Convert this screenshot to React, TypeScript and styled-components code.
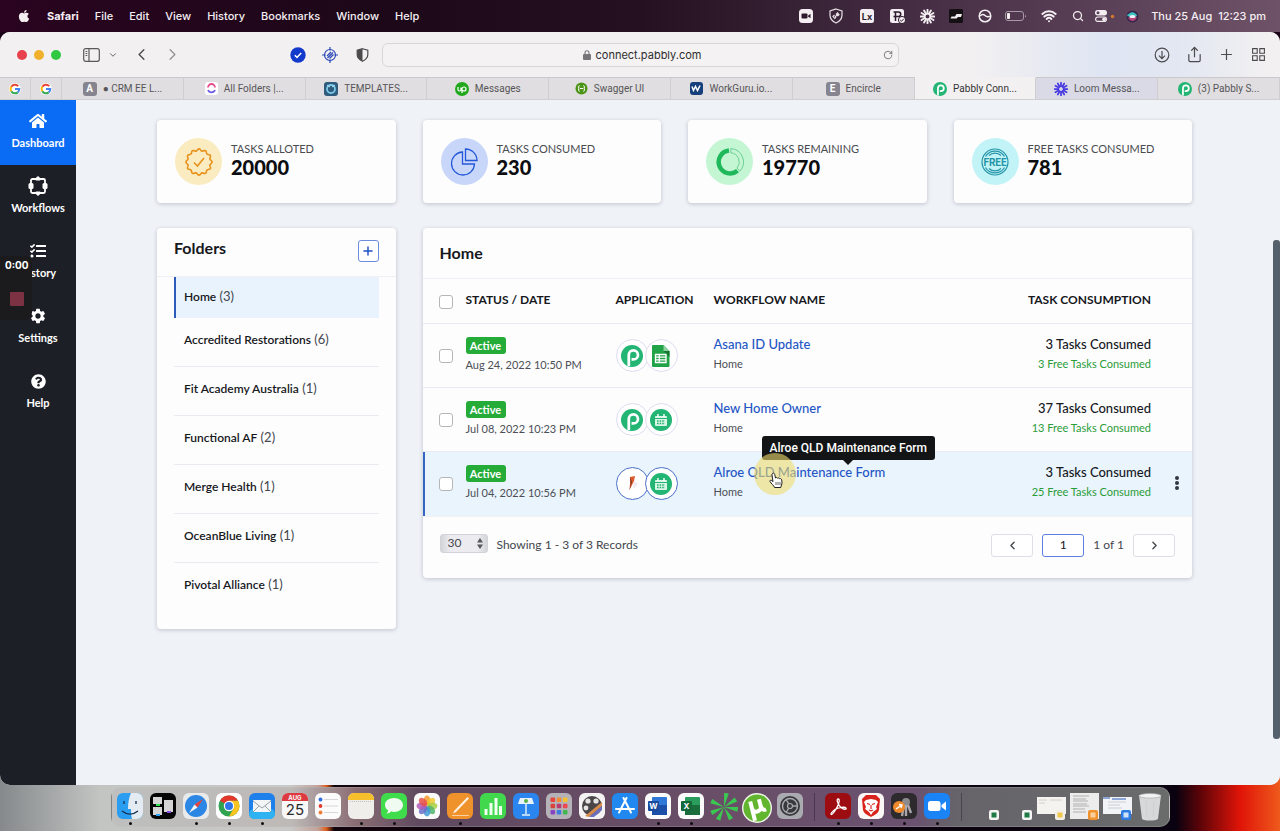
import React from "react";
import styled, { createGlobalStyle, css } from "styled-components";
import { FaApple, FaHome, FaTasks, FaQuestionCircle } from "react-icons/fa";
import { MdSettings } from "react-icons/md";
import {
  ChevronDown,
  ChevronLeft,
  ChevronRight,
  Wifi,
  Search,
  Plus,
  Share,
  RotateCw,
} from "lucide-react";

const Global = createGlobalStyle`
  * { box-sizing: border-box; }
  body { margin: 0; background: #0a0410; }
  button, input, select { font: inherit; color: inherit; margin: 0; }
  a { text-decoration: none; }
  svg { display: block; flex: none; }
`;

const UI = `Inter, "Liberation Sans", sans-serif`;
const APP = `Lato, "Open Sans", sans-serif`;

/* ---------- Desktop ---------- */

const Desktop = styled.div`
  min-height: 100vh;
  display: flex;
  flex-direction: column;
  font-family: ${UI};
  background:
    linear-gradient(90deg, #85898b 0, #c3c5c3 100px, #c9c9c7 290px, #c2a29a 318px, #e0601c 326px, #12040c 334px, #0a0410 1100px, #0a0210 1176px, #5c0408 1200px, #e01408 1240px, #ee5a1c 1280px)
      bottom / 100% 60px no-repeat,
    #1a0418;
`;

const MenuBar = styled.header`
  height: 32px;
  display: flex;
  align-items: center;
  justify-content: space-between;
  color: #f4eef2;
  background: linear-gradient(90deg, #2a0420 0, #1c0818 30%, #241020 50%, #432c42 70%, #6e5268 100%);
`;

const MenuList = styled.nav`
  display: flex;
  align-items: center;
  gap: 16px;
  padding-left: 17px;
`;

const MenuItem = styled.button<{ $bold?: boolean }>`
  border: 0;
  padding: 0;
  background: none;
  font-size: 11px;
  line-height: 16px;
  font-weight: ${(p) => (p.$bold ? 700 : 500)};
`;

const StatusList = styled.div`
  display: flex;
  align-items: center;
  padding-right: 14px;
`;

const StatusSlot = styled.span<{ $w?: number }>`
  position: relative;
  width: ${(p) => p.$w ?? 30}px;
  display: flex;
  justify-content: center;
`;

const Clock = styled.time`
  padding-left: 6px;
  font-size: 11px;
  font-weight: 500;
  white-space: pre;
`;

/* ---------- Browser window ---------- */

const BrowserWindow = styled.div`
  flex: 1;
  display: flex;
  flex-direction: column;
  border-radius: 10px;
  overflow: hidden;
  background: #f2f0f1;
`;

const Toolbar = styled.div`
  height: 45px;
  display: grid;
  grid-template-columns: 382px 1fr 381px;
  align-items: center;
  background: linear-gradient(90deg, #f2f0f1 0, #f2f0f1 76%, #dfe5f2 86%, #e2e7f2 92%, #f2f0f1 99%);
`;

const ToolGroup = styled.div<{ $end?: boolean }>`
  display: flex;
  align-items: center;
  color: #4c4a4c;
  ${(p) =>
    p.$end &&
    css`
      justify-content: flex-end;
      gap: 16px;
      padding-right: 14px;
    `}
`;

const Lights = styled.div`
  display: flex;
  gap: 7px;
  padding: 0 21px 0 17px;
`;

const Light = styled.span<{ $c: string }>`
  width: 10px;
  height: 10px;
  border-radius: 50%;
  background: ${(p) => p.$c};
`;

const ToolButton = styled.button<{ $w?: number; $faint?: boolean }>`
  border: 0;
  padding: 0;
  background: none;
  width: ${(p) => p.$w ?? 16}px;
  height: 20px;
  display: flex;
  align-items: center;
  justify-content: center;
  opacity: ${(p) => (p.$faint ? 0.55 : 1)};
`;

const Extensions = styled.div`
  display: flex;
  gap: 16px;
  margin-left: auto;
  padding-right: 12px;
`;

const Address = styled.div`
  height: 24px;
  border: 1px solid #d8d6d8;
  border-radius: 6px;
  background: #f4f2f3;
  display: flex;
  align-items: center;
  padding: 0 5px 0 18px;
  color: #2e2c2e;
  font-size: 11px;
`;

const AddressText = styled.span`
  flex: 1;
  display: flex;
  align-items: center;
  justify-content: center;
  gap: 5px;
`;

const Tabs = styled.div`
  height: 23px;
  display: flex;
  border-bottom: 1px solid #cfcfd2;
`;

const Tab = styled.button<{ $active?: boolean; $pinned?: boolean; $tint?: boolean }>`
  flex: ${(p) => (p.$pinned ? "0 0 31px" : "1 1 0")};
  min-width: 0;
  border: 0;
  border-top: 1px solid ${(p) => (p.$active ? "#f2f0f1" : "#cac8cb")};
  border-right: 1px solid #cfcdd0;
  padding: 0 4px;
  display: flex;
  align-items: center;
  justify-content: center;
  gap: 6px;
  white-space: nowrap;
  font-family: Roboto, sans-serif;
  font-size: 10px;
  color: ${(p) => (p.$active ? "#333" : "#575558")};
  background: ${(p) => (p.$active ? "#f2f0f1" : p.$tint ? "#d9dae6" : "#e0dee0")};
`;

const LetterIcon = styled.span`
  width: 14px;
  height: 14px;
  border-radius: 3px;
  background: #86848e;
  color: #fff;
  font-size: 10px;
  font-weight: 700;
  line-height: 14px;
  text-align: center;
`;

/* ---------- Application shell ---------- */

const Shell = styled.div`
  flex: 1;
  display: flex;
  background: #eff2f7;
  font-family: ${APP};
  color: #16181c;
`;

const SideNav = styled.nav`
  position: relative;
  flex: 0 0 76px;
  background: #1d1f26;
`;

const SideLink = styled.a<{ $active?: boolean }>`
  height: 65px;
  padding-top: 11px;
  display: flex;
  flex-direction: column;
  align-items: center;
  gap: 6px;
  color: #fff;
  font-size: 11px;
  line-height: 12px;
  font-weight: 700;
  background: ${(p) => (p.$active ? "#0a6cf5" : "transparent")};
`;

const SideIcon = styled.span`
  height: 20px;
  display: flex;
  align-items: center;
`;

const Recorder = styled.div`
  position: absolute;
  left: 0;
  top: 156px;
  width: 32px;
  height: 64px;
  padding: 3px 0 0 5px;
  border-radius: 0 8px 8px 0;
  background: #1b1b1d;
  color: #fff;
  font: 700 10px/12px Inter, sans-serif;
`;

const StopButton = styled.button`
  display: block;
  width: 14px;
  height: 14px;
  margin: 21px 0 0 5px;
  padding: 0;
  border: 0;
  border-radius: 1px;
  background: #7c3242;
`;

const Content = styled.main`
  flex: 1;
  min-width: 0;
  padding: 20px 81px 32px;
  display: grid;
  grid-template-columns: repeat(4, minmax(0, 1fr));
  grid-template-rows: auto 1fr;
  gap: 25px 27px;
  align-items: start;
`;

const ScrollTrack = styled.div`
  flex: 0 0 7px;
  display: flex;
  flex-direction: column;
  &::before { content: ""; flex: 140; }
  &::after { content: ""; flex: 46; }
`;

const ScrollThumb = styled.div`
  flex: 499;
  border-radius: 3px;
  background: #54616c;
`;

const Panel = styled.section<{ $span?: number }>`
  grid-column: span ${(p) => p.$span ?? 1};
  background: #fdfdfe;
  border-radius: 4px;
  box-shadow: 0 1px 4px rgba(40, 50, 70, 0.24);
`;

const Stat = styled(Panel)`
  height: 83px;
  padding: 0 18px;
  display: flex;
  align-items: center;
  gap: 9px;
`;

const StatIcon = styled.span<{ $bg: string }>`
  width: 47px;
  height: 47px;
  border-radius: 50%;
  display: grid;
  place-items: center;
  background: ${(p) => p.$bg};
`;

const StatText = styled.div`
  padding-bottom: 4px;
`;

const StatLabel = styled.div`
  font-size: 11px;
  line-height: 14px;
  color: #4a4c50;
`;

const StatValue = styled.div`
  font-size: 20px;
  line-height: 22px;
  font-weight: 900;
  color: #0c0d10;
`;

/* ---------- Folders ---------- */

const FolderHead = styled.div`
  height: 49px;
  padding: 12px 17px 0;
  display: flex;
  align-items: flex-start;
  justify-content: space-between;
  border-bottom: 1px solid #eef0f5;
`;

const Title = styled.h2`
  margin: 0;
  font-size: 16px;
  line-height: 16px;
  font-weight: 700;
`;

const AddButton = styled.button`
  width: 21px;
  height: 22px;
  padding: 0;
  display: grid;
  place-items: center;
  color: #1c50c8;
  background: #fff;
  border: 1px solid #6c8cdc;
  border-radius: 3px;
`;

const FolderList = styled.ul`
  list-style: none;
  margin: 0;
  padding: 0 17px 17px;
`;

const Folder = styled.li<{ $active?: boolean }>`
  height: 49px;
  padding: 12px 10px;
  font-size: 13px;
  line-height: 18px;
  border-bottom: 1px solid #e9ebf0;
  ${(p) =>
    p.$active &&
    css`
      height: 41px;
      padding: 10px 8px;
      background: #e9f3fd;
      border-left: 2px solid #2c5ab8;
      border-bottom: 0;
    `}
  &:last-child { border-bottom: 0; }
  a { color: #16181c; font-size: 12px; font-weight: 600; }
  span { color: #44474d; }
`;

/* ---------- Workflow table ---------- */

const TableHead = styled.div`
  height: 50px;
  padding: 17px;
`;

const Table = styled.table`
  width: 100%;
  table-layout: fixed;
  border-collapse: collapse;
  text-align: left;
  th { padding: 0 0 2px; }
  td { padding: 0 0 2px; }
`;

const HeadRow = styled.tr`
  height: 45px;
  font-size: 12px;
  line-height: 16px;
  border-top: 1px solid #eef0f5;
  th { font-weight: 700; }
`;

const Row = styled.tr<{ $hover?: boolean }>`
  height: 64px;
  border-top: 1px solid #e8ebf2;
  ${(p) =>
    p.$hover &&
    css`
      background: #e9f4fd;
      box-shadow: inset 2px 0 #3566c4;
    `}
`;

const Col = styled.col<{ $w?: number }>`
  width: ${(p) => (p.$w ? `${p.$w}px` : "auto")};
`;

const RightHead = styled.th`
  text-align: right;
`;

const Check = styled.input`
  appearance: none;
  display: block;
  width: 14px;
  height: 14px;
  margin: 3px 0 0 16px;
  border: 1px solid #b4b6ba;
  border-radius: 3px;
  background: #fff;
`;

const Badge = styled.span`
  display: block;
  width: 40px;
  height: 17px;
  margin-bottom: 3px;
  border-radius: 3px;
  background: #24ab38;
  color: #fff;
  font-size: 11px;
  line-height: 17px;
  font-weight: 700;
  text-align: center;
`;

const Small = styled.div<{ $green?: boolean }>`
  font-size: 11px;
  line-height: 15px;
  color: ${(p) => (p.$green ? "#2a9c38" : "#4c4f56")};
`;

const Stack = styled.div<{ $right?: boolean }>`
  padding-bottom: 2px;
  text-align: ${(p) => (p.$right ? "right" : "left")};
`;

const Main = styled.div`
  position: relative;
  width: fit-content;
  margin-bottom: 4px;
  font-size: 13px;
  line-height: 16px;
  a { color: #2455c4; font-weight: 500; }
`;

const Consumed = styled.div`
  margin-bottom: 4px;
  font-size: 13px;
  line-height: 16px;
  font-weight: 500;
`;

const Apps = styled.div`
  display: flex;
  padding-top: 2px;
`;

const AppCircle = styled.span<{ $hover?: boolean }>`
  width: 33px;
  height: 33px;
  display: grid;
  place-items: center;
  border: 1px solid ${(p) => (p.$hover ? "#4a70c8" : "#dfdcee")};
  border-radius: 50%;
  background: #fff;
  & + & { margin-left: -4px; }
`;

const MoreButton = styled.button`
  display: grid;
  place-items: center;
  width: 10px;
  height: 20px;
  margin-left: 21px;
  padding: 0;
  border: 0;
  background: none;
`;

const Tooltip = styled.span`
  position: absolute;
  left: 48px;
  bottom: 20px;
  padding: 0 8px;
  border-radius: 3px;
  background: #131416;
  color: #fff;
  font: 500 12px/24px Roboto, sans-serif;
  white-space: nowrap;
  &::after {
    content: "";
    position: absolute;
    left: 50%;
    top: 100%;
    margin-left: -5px;
    border: 5px solid transparent;
    border-top-color: #131416;
    border-bottom: 0;
  }
`;

const Pointer = styled.span`
  position: absolute;
  left: 40px;
  top: -11px;
  width: 42px;
  height: 42px;
  padding: 19px 0 0 15px;
  border-radius: 50%;
  background: rgba(240, 220, 110, 0.6);
`;

const Pager = styled.div`
  display: flex;
  align-items: center;
  gap: 9px;
  padding: 17px 17px 21px;
  border-top: 1px solid #f0f2f6;
  font-size: 12px;
  line-height: 16px;
  color: #44474d;
`;

const SizePicker = styled.label`
  position: relative;
  align-self: flex-start;
  svg { position: absolute; right: 5px; top: 4px; }
`;

const SizeSelect = styled.select`
  appearance: none;
  display: block;
  width: 48px;
  height: 19px;
  padding: 0 7px 1px;
  border: 1px solid #d2d3d8;
  border-radius: 3px;
  background: linear-gradient(90deg, #d3d4d9 0, #ececf0 20%, #ececf0 80%, #d3d4d9 100%);
  line-height: 16px;
`;

const PagerSpace = styled.span`
  flex: 1;
`;

const PageButton = styled.button`
  width: 42px;
  height: 23px;
  padding: 0;
  display: grid;
  place-items: center;
  border: 1px solid #dcdfe5;
  border-radius: 3px;
  background: #fff;
`;

const PageInput = styled.input`
  width: 42px;
  height: 23px;
  padding: 0 0 2px;
  text-align: center;
  border: 1px solid #5a7fe0;
  border-radius: 3px;
  background: #fff;
  color: #16181c;
`;

/* ---------- Dock ---------- */

const DockArea = styled.footer`
  height: 46px;
  display: flex;
  justify-content: center;
  align-items: flex-start;
  padding-top: 2px;
`;

const DockBar = styled.div`
  height: 40px;
  padding: 0 2px;
  display: flex;
  border-radius: 10px;
  border: 1px solid rgba(200, 200, 200, 0.25);
  background: linear-gradient(90deg, #bebfbe 0, #bdb9b7 17%, #8a6d74 23%, #604a60 29%, #6a4e68 58%, #6a5270 76%, #66646a 80%, #6a6b6b 100%);
`;

const DockSlot = styled.span<{ $running?: boolean }>`
  position: relative;
  width: 33px;
  height: 38px;
  padding-top: 5px;
  display: flex;
  justify-content: center;
  ${(p) =>
    p.$running &&
    css`
      &::after {
        content: "";
        position: absolute;
        bottom: 1px;
        width: 3px;
        height: 3px;
        border-radius: 50%;
        background: #0c0c0e;
      }
    `}
`;

const DockDivider = styled.span`
  width: 1px;
  height: 28px;
  margin: 5px 7px;
  background: rgba(30, 20, 35, 0.4);
`;

/* ---------- Icons ---------- */

const PabblyIcon = ({ size = 14 }: { size?: number }) => (
  <svg width={size} height={size} viewBox="0 0 24 24">
    <circle cx="12" cy="12" r="12" fill="#22b573" />
    <path d="M8.500 23V10.800A5 5 0 1 1 13.500 15.800H11.500" fill="none" stroke="#fff" strokeWidth="3" />
  </svg>
);

const GoogleIcon = () => (
  <svg width="12" height="12" viewBox="0 0 24 24">
    <circle cx="12" cy="12" r="12" fill="#fff" />
    <g fill="none" strokeWidth="4">
      <path d="M18.4 6.2A8.6 8.6 0 0 0 4.6 7.6" stroke="#ea4335" />
      <path d="M4.6 7.6a8.6 8.6 0 0 0 0 8.8" stroke="#fbbc05" />
      <path d="M4.6 16.4a8.6 8.6 0 0 0 12.8 2.3" stroke="#34a853" />
      <path d="M17.4 18.7A8.6 8.6 0 0 0 20.6 12H12" stroke="#4285f4" />
    </g>
  </svg>
);

const Burst = ({ color, size = 14, rays = 12 }: { color: string; size?: number; rays?: number }) => (
  <svg width={size} height={size} viewBox="-12 -12 24 24">
    {Array.from({ length: rays }, (_, i) => (
      <path
        key={i}
        d="M0-5V-11"
        stroke={color}
        strokeWidth="3"
        strokeLinecap="round"
        transform={`rotate(${(360 / rays) * i})`}
      />
    ))}
    <circle r="4.6" fill="none" stroke={color} strokeWidth="2.6" />
  </svg>
);

const CalendarAppIcon = () => (
  <svg width="22" height="22" viewBox="0 0 22 22">
    <circle cx="11" cy="11" r="11" fill="#22b573" />
    <path d="M6 7h10a1 1 0 0 1 1 1v8a1 1 0 0 1-1 1H6a1 1 0 0 1-1-1V8a1 1 0 0 1 1-1z" fill="#d8f5e6" />
    <path d="M8 5v3M14 5v3" stroke="#fff" strokeWidth="1.4" />
    <path d="M5 9.5h12" stroke="#22b573" strokeWidth="1" />
    <path d="M7 12h8M7 14.5h8" stroke="#22b573" strokeWidth="1.4" strokeDasharray="1.6 1" />
  </svg>
);

const SheetsIcon = () => (
  <svg width="18" height="22" viewBox="0 0 18 22">
    <path d="M1 0h10.500l6 6v15a1 1 0 0 1-1 1H1a1 1 0 0 1-1-1V1a1 1 0 0 1 1-1z" fill="#23a347" />
    <path d="M11.500 0l6 6h-6z" fill="#8fd1a3" />
    <path d="M11.500 6h6v6z" fill="#16762f" />
    <path d="M3.500 9.500h10.500v8H3.500zM3.500 12.200h10.500M3.500 14.800h10.500M7.300 9.500v8" fill="none" stroke="#fff" strokeWidth="1.300" />
  </svg>
);

const QuillIcon = () => (
  <svg width="20" height="20" viewBox="0 0 20 20">
    <path d="M12 7l4 3-5 5z" fill="#eee9ee" />
    <path d="M8 3l5-1-1 5L7.500 16l.5-6z" fill="#dc5a2c" />
    <path d="M8 3l.8 6-1.300 7L10 8z" fill="#6c3428" />
  </svg>
);

const WorkflowIcon = () => (
  <svg width="20" height="20" viewBox="0 0 20 20">
    <rect x="3" y="3" width="14" height="14" rx="1.500" fill="none" stroke="#fff" strokeWidth="1.800" />
    <path d="M7.800 2l2.200-2 2.200 2v2.500H7.800zM7.800 15.500h4.400V18L10 20l-2.200-2z" fill="#fff" />
    <rect x="0.500" y="7" width="5" height="6" rx="1.500" fill="#fff" />
    <rect x="14.500" y="7" width="5" height="6" rx="1.500" fill="#fff" />
  </svg>
);

const sealPath = (() => {
  let d = "";
  for (let i = 0; i <= 120; i++) {
    const t = (i / 120) * Math.PI * 2;
    const r = 12.2 + 0.9 * Math.cos(t * 12);
    d += `${i ? "L" : "M"}${(r * Math.cos(t)).toFixed(2)} ${(r * Math.sin(t)).toFixed(2)}`;
  }
  return d + "Z";
})();

const SealIcon = () => (
  <svg width="28" height="28" viewBox="-14 -14 28 28" fill="none" stroke="#e8921c" strokeWidth="1.600">
    <path d={sealPath} />
    <path d="M-5 0.500L-1.500 4 5-4" />
  </svg>
);

const PieIcon = () => (
  <svg width="28" height="28" viewBox="0 0 28 28" fill="none" stroke="#2458d8" strokeWidth="1.300">
    <path d="M12.500 4A11.500 11.500 0 1 0 24.500 16H12.500z" />
    <path d="M15.500 1v11.500H27A11.500 11.500 0 0 0 15.500 1z" />
  </svg>
);

const DonutIcon = () => (
  <svg width="28" height="28" viewBox="0 0 28 28" fill="none">
    <path d="M13 2.500A11.500 11.500 0 1 0 21.500 22.800" stroke="#1fb85a" strokeWidth="4.500" />
    <path d="M14.800 0.600A13.400 13.400 0 0 1 23.800 23.200M14.800 4.800A9.200 9.200 0 0 1 21 20M14.800 0.600v4.200M21 20l2.800 3.200" stroke="#58c485" strokeWidth="0.800" />
  </svg>
);

const FreeIcon = () => (
  <svg width="28" height="28" viewBox="0 0 28 28" fill="none" stroke="#2494a8" strokeWidth="1.200">
    <circle cx="14" cy="14" r="13" />
    <path d="M4.500 8.500a11 11 0 0 1 19 0M4.500 19.500a11 11 0 0 0 19 0M8 7.500a8.800 8.800 0 0 1 12 0M8 20.500a8.800 8.800 0 0 0 12 0" />
    <text x="14" y="18" fill="#2494a8" stroke="none" fontFamily="Roboto, sans-serif" fontWeight="700" fontSize="10" textAnchor="middle">FREE</text>
  </svg>
);

const HandIcon = () => (
  <svg width="14" height="17" viewBox="0 0 14 17">
    <path
      d="M3.500 1.500c1-.8 2 0 2.200.8L6.500 6c.6-.8 1.700-.6 2 .2.700-.6 1.700-.3 2 .5.900-.4 2 .1 2.200 1.200l.3 3c0 1.500-1 2.500-1.200 4.600H5.500C5 13.500 2 11.500 1 9.500c-.5-1.100.8-1.700 1.700-1L4 9.600 3 3c-.1-.6 0-1.100.5-1.500z"
      fill="#fff"
      stroke="#222"
      strokeWidth="1"
    />
    <path d="M7 10v3M9 10v3M11 10v3" stroke="#222" strokeWidth="0.700" />
  </svg>
);

/* Rounded square tile used by most dock applications */
const Tile = ({ fill, children }: { fill: string; children?: React.ReactNode }) => (
  <svg width="26" height="26" viewBox="0 0 26 26">
    <rect width="26" height="26" rx="6" fill={fill} />
    {children}
  </svg>
);

const petals = ["#f29a2e", "#f2c92e", "#a8cf45", "#4fb56b", "#3f9bd6", "#6a6fc8", "#b25bb8", "#e8504a"];

const dockApps: { name: string; running?: boolean; icon: React.ReactNode }[] = [
  { name: "Finder", running: true, icon: (
    <Tile fill="#2a9df0">
      <path d="M14 0h6a6 6 0 0 1 6 6v14a6 6 0 0 1-6 6h-5c-1-4-1-7-1-10h-3c0-6 1-12 3-16z" fill="#e4ebf2" />
      <path d="M7 8v3M19 8v3M5 18c5 4 11 4 16 0" fill="none" stroke="#143050" strokeWidth="1.300" />
    </Tile>) },
  { name: "Mission Control", icon: (
    <Tile fill="#050505">
      <path d="M3 4h9v7H3zM14 7h9v12h-9zM3 14h9v8H3z" fill="#d4d4d4" />
      <path d="M6 11h4v2H6z" fill="#2ee04a" /><path d="M17 18h4v2h-4z" fill="#8a4ae0" /><path d="M6 21h4v2H6z" fill="#2ea0f0" />
    </Tile>) },
  { name: "Safari", running: true, icon: (
    <Tile fill="#e8eaec">
      <circle cx="13" cy="13" r="11" fill="#2c86e4" />
      <path d="M20 6l-5.500 8.500-3-3z" fill="#e8443c" /><path d="M6 20l5.500-8.500 3 3z" fill="#f4f4f4" />
    </Tile>) },
  { name: "Chrome", running: true, icon: (
    <Tile fill="#fff">
      <circle cx="13" cy="13" r="10.500" fill="#2fa34f" />
      <path d="M13 13L3.900 7.700A10.500 10.500 0 0 1 22.100 7.800H13z" fill="#e2382c" />
      <path d="M13 7.800h9.100A10.500 10.500 0 0 1 13 23.500l4.500-8z" fill="#fbc520" />
      <circle cx="13" cy="13" r="5.200" fill="#fff" /><circle cx="13" cy="13" r="4" fill="#2f74e8" />
    </Tile>) },
  { name: "Mail", running: true, icon: (
    <Tile fill="#1f80ec">
      <rect y="16" width="26" height="10" rx="5" fill="#2fb2f2" />
      <rect x="4" y="7" width="18" height="12" rx="1" fill="#f2f4f6" />
      <path d="M4 8l9 7 9-7M4 19l6-6M22 19l-6-6" fill="none" stroke="#8e979e" strokeWidth="0.900" />
    </Tile>) },
  { name: "Calendar", icon: (
    <Tile fill="#f8f8f8">
      <path d="M0 8V6a6 6 0 0 1 6-6h14a6 6 0 0 1 6 6v2z" fill="#dc3a40" />
      <text x="13" y="7" fontSize="6" fontWeight="700" fill="#fff" textAnchor="middle" fontFamily="Inter, sans-serif">AUG</text>
      <text x="13" y="22" fontSize="15" fill="#2a2a2a" textAnchor="middle" fontFamily="Inter, sans-serif">25</text>
    </Tile>) },
  { name: "Reminders", icon: (
    <Tile fill="#fbfbfb">
      <circle cx="5.500" cy="6.500" r="1.900" fill="#2f6ce0" /><circle cx="5.500" cy="13" r="1.900" fill="#dc3c34" /><circle cx="5.500" cy="19.500" r="1.900" fill="#ee7c34" />
      <path d="M9 6.500h14M9 13h14M9 19.500h14" stroke="#cfcfd2" strokeWidth="0.800" />
    </Tile>) },
  { name: "Notes", running: true, icon: (
    <Tile fill="#f0eeea">
      <path d="M0 7V6a6 6 0 0 1 6-6h14a6 6 0 0 1 6 6v1z" fill="#f6c02c" />
      <path d="M2 8.500h22" stroke="#b8b4ac" strokeWidth="0.800" strokeDasharray="1 1" />
    </Tile>) },
  { name: "Messages", running: true, icon: (
    <Tile fill="#3fdc4c">
      <path d="M13 5c5.200 0 9 3 9 7s-3.800 7-9 7c-1 0-2-.1-2.900-.4C9 20 7 20.600 5.500 20.500 6.500 19.600 7 18.500 7 17.200 5.100 16 4 14.100 4 12c0-4 3.800-7 9-7z" fill="#effaf0" />
    </Tile>) },
  { name: "Photos", icon: (
    <Tile fill="#fafafa">
      {petals.map((c, i) => (
        <ellipse key={c} cx="13" cy="7.500" rx="3.400" ry="5" fill={c} opacity="0.850" transform={`rotate(${i * 45} 13 13)`} />
      ))}
    </Tile>) },
  { name: "Pages", running: true, icon: (
    <Tile fill="#f0922c">
      <path d="M20.500 4l1.500 1.500L9 19l-3 1.500L7.500 17.500z" fill="#fff3e4" /><path d="M5 22.500h17" stroke="#fbd8b0" strokeWidth="0.900" />
    </Tile>) },
  { name: "Numbers", icon: (
    <Tile fill="#41d84e">
      <path d="M6 22v-6M11 22V10M16 22V5M20.500 22v-9" stroke="#f0fff0" strokeWidth="3" />
    </Tile>) },
  { name: "Keynote", icon: (
    <Tile fill="#2a86ee">
      <path d="M7 5h12l2 6H5z" fill="#e8f2fb" /><path d="M13 11v10M9 22h8" stroke="#e8f2fb" strokeWidth="1.400" />
      <circle cx="13" cy="8" r="2" fill="#58b04c" />
    </Tile>) },
  { name: "Launchpad", icon: (
    <Tile fill="#b6b3b8">
      {["#e8443c", "#f08c34", "#f2c22e", "#d8443c", "#b83a70", "#e84a50", "#8844c0", "#3c7ce0", "#40b850"].map((c, i) => (
        <rect key={c} x={4.500 + (i % 3) * 6.200} y={4.500 + Math.floor(i / 3) * 6.200} width="4.600" height="4.600" rx="1" fill={c} />
      ))}
    </Tile>) },
  { name: "Video Tool", icon: (
    <Tile fill="#f4f2f2">
      <circle cx="13" cy="13" r="10" fill="#4a4648" /><circle cx="9" cy="8" r="2.600" fill="#e4e4e4" /><circle cx="17" cy="8" r="2.600" fill="#e4e4e4" /><circle cx="7" cy="15" r="2.400" fill="#e4e4e4" />
      <path d="M6 23L23 9v4L10 24z" fill="#d88c4c" /><path d="M10 24l13-11v4l-8 7z" fill="#6c70c0" />
    </Tile>) },
  { name: "App Store", icon: (
    <Tile fill="#2088ee">
      <path d="M14.500 5L7 19.500M11.500 5L19 19.500M4 16h18" fill="none" stroke="#fff" strokeWidth="2" strokeLinecap="round" />
    </Tile>) },
  { name: "Word", running: true, icon: (
    <Tile fill="#fbfbfb">
      <rect x="7" y="4" width="15" height="18" rx="1" fill="#2f78d8" /><path d="M7 12h15v10H7z" fill="#1c50a8" />
      <rect x="3" y="8" width="11" height="10" rx="1" fill="#184a9c" />
      <text x="8.500" y="16" fontSize="8" fontWeight="700" fill="#fff" textAnchor="middle" fontFamily="Inter, sans-serif">W</text>
    </Tile>) },
  { name: "Excel", running: true, icon: (
    <Tile fill="#fbfbfb">
      <rect x="7" y="4" width="15" height="18" rx="1" fill="#2a9c5c" /><path d="M7 12h15v10H7z" fill="#1a6e3c" />
      <rect x="3" y="8" width="11" height="10" rx="1" fill="#14683a" />
      <text x="8.500" y="16" fontSize="8" fontWeight="700" fill="#fff" textAnchor="middle" fontFamily="Inter, sans-serif">X</text>
    </Tile>) },
  { name: "Starburst", icon: (
    <svg width="28" height="28" viewBox="-13 -13 26 26">
      {[10, 58, 100, 150, 205, 245, 295].map((a) => (
        <path key={a} d="M0 0L2.200-13-2.200-13z" fill="#3bc850" transform={`rotate(${a})`} />
      ))}
    </svg>) },
  { name: "uTorrent", icon: (
    <svg width="30" height="30" viewBox="0 0 30 30">
      <circle cx="15" cy="15" r="15" fill="#f2f8ee" /><circle cx="15" cy="15" r="13.600" fill="#62b52e" />
      <g transform="rotate(-14 15 15)" fill="none" stroke="#fff" strokeWidth="4">
        <path d="M10 7v20M10 14c0 6 9 6 9 0V7M19 13c0 4 1.500 6 4.500 5.500" />
      </g>
    </svg>) },
  { name: "System Preferences", icon: (
    <Tile fill="#a9abb0">
      <circle cx="13" cy="13" r="10" fill="#37393d" /><circle cx="13" cy="13" r="7.500" fill="none" stroke="#a9abb0" strokeWidth="1.400" />
      <circle cx="13" cy="13" r="2.500" fill="none" stroke="#a9abb0" strokeWidth="1.200" />
      <path d="M15.500 13h5M11.800 10.800L9 6.500M11.800 15.200L9 19.500" stroke="#a9abb0" strokeWidth="1.300" />
    </Tile>) },
];

const dockTools: { name: string; icon: React.ReactNode }[] = [
  { name: "Acrobat", icon: (
    <Tile fill="#9c0c10">
      <path d="M13 6c-2 0 0 6 3 8.500s6 2 5 .5-8-.5-11 1.500-5 5-3.500 5S12 15 13.500 11 14 6 13 6z" fill="none" stroke="#fff" strokeWidth="1.300" />
    </Tile>) },
  { name: "Brave", icon: (
    <Tile fill="#fbf7f6">
      <path d="M8 2h10l4 4-1 11c-1 4-5 5-8 7-3-2-7-3-8-7L4 6z" fill="#d8241c" />
      <path d="M8 7l5-1 5 1 2 2-2 5 1 2-4 3-2 3-2-3-4-3 1-2-2-5z" fill="#fff" />
      <path d="M9 10.500l3 1M17 10.500l-3 1M13 12v4M11 17l2 1 2-1" fill="none" stroke="#d8241c" strokeWidth="1.100" />
    </Tile>) },
  { name: "Keychain", icon: (
    <Tile fill="#2c2a2c">
      <circle cx="15" cy="9" r="4" fill="#8c8a8c" /><path d="M13 12l-2 11M15 12v11M17 12l3 8" stroke="#a9a7a9" strokeWidth="2.400" />
      <circle cx="8" cy="14" r="6" fill="#ee8a2c" /><path d="M5 16l6-4M8 11.500l3 .5-1 3" fill="none" stroke="#fff" strokeWidth="1.300" />
    </Tile>) },
  { name: "Zoom", icon: (
    <Tile fill="#1a84f6">
      <rect x="4" y="8" width="12.500" height="10" rx="2.500" fill="#fff" /><path d="M17.500 12l4.500-3.500v9L17.500 14z" fill="#fff" />
    </Tile>) },
];

const MiniBadge = ({ fill, inner }: { fill: string; inner: string }) => (
  <g>
    <rect x="20" y="17" width="10" height="10" rx="2" fill={fill} />
    <rect x="22.500" y="19.500" width="5" height="5" fill={inner} />
  </g>
);

const dockWindows: { name: string; icon: React.ReactNode }[] = [
  { name: "Sheet A", icon: <svg width="33" height="28" viewBox="0 0 33 28"><MiniBadge fill="#f4f4f4" inner="#1d7a44" /></svg> },
  { name: "Sheet B", icon: <svg width="33" height="28" viewBox="0 0 33 28"><MiniBadge fill="#f4f4f4" inner="#1d7a44" /></svg> },
  { name: "Note", icon: (
    <svg width="33" height="28" viewBox="0 0 33 28">
      <path d="M2 4h29v17H2z" fill="#f4f3f0" /><path d="M4 7h8M4 10h6M15 7h12" stroke="#c9c7c2" strokeWidth="0.800" /><MiniBadge fill="#f2efe6" inner="#f0c84c" />
    </svg>) },
  { name: "Document", icon: (
    <svg width="33" height="28" viewBox="0 0 33 28">
      <path d="M2 0h29v26H2z" fill="#ececec" /><path d="M5 3h16M5 6h13M5 8h15M5 11h14M5 13h16M5 16h12M5 19h13" stroke="#98989a" strokeWidth="0.700" /><MiniBadge fill="#f0922c" inner="#fbd0a0" />
    </svg>) },
  { name: "Message", icon: (
    <svg width="33" height="28" viewBox="0 0 33 28">
      <path d="M2 4h29v17H2z" fill="#f1f3f7" /><path d="M2 5h7M11 6h14" stroke="#2c58b8" strokeWidth="1" /><path d="M7 9h18M7 12h12M7 15h14" stroke="#c2c6ce" strokeWidth="0.800" /><MiniBadge fill="#2c7ce4" inner="#cfe2f8" />
    </svg>) },
  { name: "Trash", icon: (
    <svg width="26" height="28" viewBox="0 0 26 28">
      <path d="M2 2h22l-3 24c-3 2-13 2-16 0z" fill="#d6d8da" /><ellipse cx="13" cy="2.800" rx="11" ry="2.300" fill="#f2f3f4" stroke="#a9abad" strokeWidth="0.700" />
      <path d="M9 8l1 16M17 8l-1 16" stroke="#cbced0" strokeWidth="0.800" />
    </svg>) },
];

/* ---------- Data ---------- */

const tabs: { label: string; icon: React.ReactNode; active?: boolean; tint?: boolean }[] = [
  { label: "● CRM EE L...", icon: <LetterIcon>A</LetterIcon> },
  { label: "All Folders |...", icon: (
    <svg width="13" height="13" viewBox="0 0 13 13"><rect width="13" height="13" rx="3" fill="#fff" /><path d="M3 5.500a3.500 3.500 0 0 1 7 0" fill="none" stroke="#e84a8c" strokeWidth="1.800" /><path d="M3 8a3.800 3.800 0 0 0 7 0" fill="none" stroke="#6c5ce8" strokeWidth="1.800" /></svg>) },
  { label: "TEMPLATES...", icon: (
    <svg width="14" height="14" viewBox="0 0 14 14"><rect width="14" height="14" rx="3" fill="#2f5c7c" /><circle cx="7" cy="7" r="4" fill="none" stroke="#7cc8e8" strokeWidth="1.800" /><path d="M3 3l3 2M11 3L8 5" stroke="#b8e4f4" /></svg>) },
  { label: "Messages", icon: (
    <svg width="14" height="14" viewBox="0 0 14 14"><circle cx="7" cy="7" r="7" fill="#22a81c" /><path d="M3 5v2.500a1.500 1.500 0 0 0 3 0V5.500M7 11V7a2 2 0 1 1 2 2c-1.500 0-2.500-1-3-3" fill="none" stroke="#fff" strokeWidth="1.200" /></svg>) },
  { label: "Swagger UI", icon: (
    <svg width="13" height="13" viewBox="0 0 13 13"><circle cx="6.500" cy="6.500" r="6" fill="#4c9418" /><path d="M4.500 3.500c-1.500 0 0 3-1.500 3 1.500 0 0 3 1.500 3M8.500 3.500c1.500 0 0 3 1.500 3-1.500 0 0 3-1.500 3M4.800 6.500h3.600" fill="none" stroke="#fff" strokeWidth="1" /></svg>) },
  { label: "WorkGuru.io...", icon: (
    <svg width="13" height="13" viewBox="0 0 13 13"><rect width="13" height="13" rx="3" fill="#16407c" /><path d="M2 4.500l1.500 4 2-4 2 4 2.500-5" fill="none" stroke="#fff" strokeWidth="1.500" /></svg>) },
  { label: "Encircle", icon: <LetterIcon>E</LetterIcon> },
  { label: "Pabbly Conn...", icon: <PabblyIcon />, active: true },
  { label: "Loom Messa...", icon: <Burst color="#4a3ce0" />, tint: true },
  { label: "(3) Pabbly S...", icon: <PabblyIcon /> },
];

const stats = [
  { label: "TASKS ALLOTED", value: "20000", bg: "#faecc0", icon: <SealIcon /> },
  { label: "TASKS CONSUMED", value: "230", bg: "#c8d6fa", icon: <PieIcon /> },
  { label: "TASKS REMAINING", value: "19770", bg: "#c4f6d4", icon: <DonutIcon /> },
  { label: "FREE TASKS CONSUMED", value: "781", bg: "#c2f3f7", icon: <FreeIcon /> },
];

const folders: [string, number][] = [
  ["Home", 3],
  ["Accredited Restorations", 6],
  ["Fit Academy Australia", 1],
  ["Functional AF", 2],
  ["Merge Health", 1],
  ["OceanBlue Living", 1],
  ["Pivotal Alliance", 1],
];

const workflows = [
  { date: "Aug 24, 2022 10:50 PM", name: "Asana ID Update", tasks: 3, free: 3, apps: ["pabbly", "sheets"] },
  { date: "Jul 08, 2022 10:23 PM", name: "New Home Owner", tasks: 37, free: 13, apps: ["pabbly", "calendar"] },
  { date: "Jul 04, 2022 10:56 PM", name: "Alroe QLD Maintenance Form", tasks: 3, free: 25, apps: ["quill", "calendar"], hover: true },
];

const appIcons: Record<string, React.ReactNode> = {
  pabbly: <PabblyIcon size={22} />,
  sheets: <SheetsIcon />,
  calendar: <CalendarAppIcon />,
  quill: <QuillIcon />,
};

const sideLinks = [
  { label: "Dashboard", icon: <FaHome size={18} />, active: true },
  { label: "Workflows", icon: <WorkflowIcon /> },
  { label: "History", icon: <FaTasks size={16} /> },
  { label: "Settings", icon: <MdSettings size={18} /> },
  { label: "Help", icon: <FaQuestionCircle size={15} /> },
];

/* ---------- Sections ---------- */

const SystemMenu = () => (
  <MenuBar>
    <MenuList aria-label="System menu">
      <FaApple size={14} />
      {["Safari", "File", "Edit", "View", "History", "Bookmarks", "Window", "Help"].map((m) => (
        <MenuItem key={m} $bold={m === "Safari"}>{m}</MenuItem>
      ))}
    </MenuList>
    <StatusList>
      <StatusSlot><svg width="14" height="14" viewBox="0 0 14 14"><rect width="14" height="14" rx="3.500" fill="#f4eef2" /><rect x="2.500" y="4.500" width="6" height="5" rx="1" fill="#2c1a2c" /><path d="M9 6.800l2.500-2v4.500L9 7.500z" fill="#2c1a2c" /></svg></StatusSlot>
      <StatusSlot><svg width="16" height="16" viewBox="0 0 16 16" fill="none" stroke="#e8e0e6" strokeWidth="1.200"><path d="M8 1l6 2v4c0 4-2.500 6.500-6 8-3.500-1.500-6-4-6-8V3z" /><path d="M7 9l3-3M6.500 7L5 8.500 6.800 10.300 8 9M8 6.500L9.500 5 11 6.700 9.500 8.200" /></svg></StatusSlot>
      <StatusSlot $w={32}><svg width="14" height="14" viewBox="0 0 14 14"><rect width="14" height="14" rx="2.500" fill="#f4eef2" /><text x="7" y="10.500" fontSize="9" fontWeight="700" fill="#2c1a2c" textAnchor="middle" fontFamily="Inter, sans-serif">Lx</text></svg></StatusSlot>
      <StatusSlot><svg width="16" height="15" viewBox="0 0 16 15"><rect width="14" height="14" rx="2.500" fill="#f4eef2" /><path d="M5.500 12V3h3a2.200 2.200 0 0 1 0 4.500h-3M3.500 3h3M3.500 7.500h3" fill="none" stroke="#2c1a2c" strokeWidth="1.500" /><circle cx="12" cy="11" r="3.600" fill="#f4eef2" stroke="#2c1a2c" /><path d="M10.200 11l1.300 1.300 2.200-2.400" fill="none" stroke="#2c1a2c" /></svg></StatusSlot>
      <StatusSlot $w={28}><Burst color="#f4eef2" size={15} /></StatusSlot>
      <StatusSlot><svg width="14" height="14" viewBox="0 0 14 14"><rect width="14" height="14" rx="1.500" fill="#141014" /><path d="M1.500 9.500h6l1.500-1.500h3l1-3H7.500L6 7.500H2.500z" fill="#f4eef2" /></svg></StatusSlot>
      <StatusSlot $w={28}><svg width="14" height="14" viewBox="0 0 14 14" fill="none" stroke="#f4eef2" strokeWidth="1.500"><circle cx="7" cy="7" r="5.800" /><path d="M2 7c2-2 3.500-2 5-.500S11 8 12 7" /></svg></StatusSlot>
      <StatusSlot $w={34}><svg width="22" height="10" viewBox="0 0 22 10"><rect x="0.500" y="0.500" width="18" height="9" rx="2.500" fill="none" stroke="#a999a6" /><rect x="2" y="2" width="3" height="6" rx="1" fill="#f4eef2" /><path d="M20 3.500v3l1.200-1z" fill="#a999a6" /></svg></StatusSlot>
      <StatusSlot $w={32}><Wifi size={16} strokeWidth={3} /></StatusSlot>
      <StatusSlot $w={26}><Search size={12} strokeWidth={2.500} /></StatusSlot>
      <StatusSlot $w={28}><svg width="20" height="12" viewBox="0 0 20 12"><rect width="12" height="5.400" rx="2.700" fill="#f4eef2" /><circle cx="3" cy="2.700" r="1.500" fill="#5a4058" /><rect x="0.600" y="7" width="10.800" height="4.400" rx="2.200" fill="none" stroke="#f4eef2" strokeWidth="1.200" /><circle cx="9" cy="9.200" r="1.800" fill="#f4eef2" /><circle cx="17.500" cy="6.500" r="1.800" fill="#d0782c" /></svg></StatusSlot>
      <StatusSlot $w={26}><svg width="13" height="13" viewBox="0 0 13 13"><circle cx="6.500" cy="6.500" r="6" fill="#38264c" /><path d="M1 6c3-5 8-5 10 0-3 1-7 1-10 0z" fill="#3cc4c0" /><path d="M2 8c3 4 7 4 9-1-3-1-6-1-9 1z" fill="#b8467c" /><ellipse cx="6.500" cy="6.500" rx="3" ry="1.600" fill="#f0f0fa" /></svg></StatusSlot>
      <Clock>{"Thu 25 Aug  12:23 pm"}</Clock>
    </StatusList>
  </MenuBar>
);

const BrowserChrome = () => (
  <>
    <Toolbar>
      <ToolGroup>
        <Lights><Light $c="#e8404c" /><Light $c="#f0b02c" /><Light $c="#30c840" /></Lights>
        <ToolButton $w={19} aria-label="Sidebar">
          <svg width="17" height="14" viewBox="0 0 17 14" fill="none" stroke="#5a585a" strokeWidth="1.200"><rect x="0.700" y="0.700" width="15.600" height="12.600" rx="2" /><path d="M6 1v12M2.500 3.500h1.800M2.500 5.500h1.800M2.500 7.500h1.800" /></svg>
        </ToolButton>
        <ToolButton $w={24} aria-label="Tab groups"><ChevronDown size={10} /></ToolButton>
        <ToolButton $w={32} aria-label="Back"><ChevronLeft size={19} strokeWidth={1.700} /></ToolButton>
        <ToolButton $w={30} $faint aria-label="Forward"><ChevronRight size={19} strokeWidth={1.700} /></ToolButton>
        <Extensions>
          <ToolButton aria-label="Tasks extension"><svg width="16" height="16" viewBox="0 0 16 16"><circle cx="8" cy="8" r="7.700" fill="#1238cc" /><path d="M4.800 8.200l2.200 2.200 4.200-4.400" fill="none" stroke="#fff" strokeWidth="1.500" /></svg></ToolButton>
          <ToolButton aria-label="Target extension"><svg width="16" height="16" viewBox="0 0 16 16" fill="none" stroke="#2c48b8" strokeWidth="1.200"><circle cx="8" cy="8" r="5.500" /><path d="M8 0v3.500M8 12.500V16M0 8h3.500M12.500 8H16M5 9l4-4M5.500 11L11 5.500M7.500 11.500l4-4" /></svg></ToolButton>
          <ToolButton aria-label="Privacy report"><svg width="13" height="14" viewBox="0 0 13 14"><path d="M6.500.7l5.300 1.600v4.500c0 3-2.300 5-5.300 6.500-3-1.500-5.300-3.500-5.300-6.500V2.300z" fill="none" stroke="#4c4a4c" strokeWidth="1.200" /><path d="M6.500.7v12.600c-3-1.500-5.300-3.500-5.300-6.500V2.300z" fill="#4c4a4c" /></svg></ToolButton>
        </Extensions>
      </ToolGroup>
      <Address>
        <AddressText>
          <svg width="8" height="10" viewBox="0 0 8 10"><rect y="4" width="8" height="6" rx="1" fill="#777578" /><path d="M2 4V2.800a2 2 0 0 1 4 0V4" fill="none" stroke="#777578" strokeWidth="1.100" /></svg>
          connect.pabbly.com
        </AddressText>
        <ToolButton $w={10} aria-label="Reload"><RotateCw size={10} color="#6a686a" /></ToolButton>
      </Address>
      <ToolGroup $end>
        <ToolButton aria-label="Downloads"><svg width="16" height="16" viewBox="0 0 16 16" fill="none" stroke="#4c4a4c" strokeWidth="1.200"><circle cx="8" cy="8" r="6.800" /><path d="M8 4v7.500M5 8.700l3 3 3-3" /></svg></ToolButton>
        <ToolButton aria-label="Share"><Share size={17} strokeWidth={1.700} /></ToolButton>
        <ToolButton aria-label="New tab"><Plus size={17} strokeWidth={1.700} /></ToolButton>
        <ToolButton aria-label="Tab overview"><svg width="13" height="13" viewBox="0 0 13 13" fill="none" stroke="#4c4a4c" strokeWidth="1.100"><path d="M.6.6h4.600v4.600H.6zM7.800.6h4.600v4.600H7.800zM.6 7.800h4.600v4.600H.6zM7.800 7.800h4.600v4.600H7.800z" /></svg></ToolButton>
      </ToolGroup>
    </Toolbar>
    <Tabs>
      <Tab $pinned aria-label="Google"><GoogleIcon /></Tab>
      <Tab $pinned aria-label="Google"><GoogleIcon /></Tab>
      {tabs.map((t) => (
        <Tab key={t.label} $active={t.active} $tint={t.tint}>{t.icon}<span>{t.label}</span></Tab>
      ))}
    </Tabs>
  </>
);

const FolderPanel = () => (
  <Panel>
    <FolderHead>
      <Title>Folders</Title>
      <AddButton aria-label="Add folder"><Plus size={14} strokeWidth={2.500} /></AddButton>
    </FolderHead>
    <FolderList>
      {folders.map(([name, count], i) => (
        <Folder key={name} $active={i === 0}><a href="#folder">{name}</a> <span>({count})</span></Folder>
      ))}
    </FolderList>
  </Panel>
);

const WorkflowPanel = () => (
  <Panel $span={3}>
    <TableHead><Title>Home</Title></TableHead>
    <Table>
      <colgroup><Col $w={43} /><Col $w={150} /><Col $w={98} /><Col /><Col $w={170} /><Col $w={41} /></colgroup>
      <thead>
        <HeadRow>
          <th><Check type="checkbox" aria-label="Select all" /></th>
          <th>STATUS / DATE</th>
          <th>APPLICATION</th>
          <th>WORKFLOW NAME</th>
          <RightHead>TASK CONSUMPTION</RightHead>
          <th />
        </HeadRow>
      </thead>
      <tbody>
        {workflows.map((w) => (
          <Row key={w.name} $hover={w.hover}>
            <td><Check type="checkbox" aria-label={`Select ${w.name}`} /></td>
            <td><Badge>Active</Badge><Small>{w.date}</Small></td>
            <td><Apps>{w.apps.map((a) => <AppCircle key={a} $hover={w.hover}>{appIcons[a]}</AppCircle>)}</Apps></td>
            <td>
              <Stack>
                <Main>
                  <a href="#workflow">{w.name}</a>
                  {w.hover && <Tooltip role="tooltip">{w.name}</Tooltip>}
                  {w.hover && <Pointer><HandIcon /></Pointer>}
                </Main>
                <Small>Home</Small>
              </Stack>
            </td>
            <td>
              <Stack $right><Consumed>{w.tasks} Tasks Consumed</Consumed><Small $green>{w.free} Free Tasks Consumed</Small></Stack>
            </td>
            <td>
              {w.hover && (
                <MoreButton aria-label="More actions">
                  <svg width="4" height="14" viewBox="0 0 4 14" fill="#33373f"><circle cx="2" cy="2" r="2" /><circle cx="2" cy="7" r="2" /><circle cx="2" cy="12" r="2" /></svg>
                </MoreButton>
              )}
            </td>
          </Row>
        ))}
      </tbody>
    </Table>
    <Pager>
      <SizePicker>
        <SizeSelect aria-label="Records per page" defaultValue="30"><option>30</option><option>50</option></SizeSelect>
        <svg width="6" height="11" viewBox="0 0 6 11" fill="#55575c"><path d="M3 0l3 4.500H0zM3 11l3-4.500H0z" /></svg>
      </SizePicker>
      <span>Showing 1 - 3 of 3 Records</span>
      <PagerSpace />
      <PageButton aria-label="Previous page"><ChevronLeft size={13} strokeWidth={2.500} /></PageButton>
      <PageInput aria-label="Page" defaultValue="1" />
      <span>1 of 1</span>
      <PageButton aria-label="Next page"><ChevronRight size={13} strokeWidth={2.500} /></PageButton>
    </Pager>
  </Panel>
);

const Dock = () => (
  <DockArea>
    <DockBar>
      {dockApps.map((a) => <DockSlot key={a.name} $running={a.running}>{a.icon}</DockSlot>)}
      <DockDivider />
      {dockTools.map((a) => <DockSlot key={a.name} $running>{a.icon}</DockSlot>)}
      <DockDivider />
      {dockWindows.map((a) => <DockSlot key={a.name}>{a.icon}</DockSlot>)}
    </DockBar>
  </DockArea>
);

export default function App() {
  return (
    <>
      <Global />
      <Desktop>
        <SystemMenu />
        <BrowserWindow>
          <BrowserChrome />
          <Shell>
            <SideNav aria-label="Main">
              {sideLinks.map((l) => (
                <SideLink key={l.label} href="#nav" $active={l.active}><SideIcon>{l.icon}</SideIcon>{l.label}</SideLink>
              ))}
              <Recorder>0:00<StopButton aria-label="Stop recording" /></Recorder>
            </SideNav>
            <Content>
              {stats.map((s) => (
                <Stat key={s.label}>
                  <StatIcon $bg={s.bg}>{s.icon}</StatIcon>
                  <StatText><StatLabel>{s.label}</StatLabel><StatValue>{s.value}</StatValue></StatText>
                </Stat>
              ))}
              <FolderPanel />
              <WorkflowPanel />
            </Content>
            <ScrollTrack><ScrollThumb /></ScrollTrack>
          </Shell>
        </BrowserWindow>
        <Dock />
      </Desktop>
    </>
  );
}
